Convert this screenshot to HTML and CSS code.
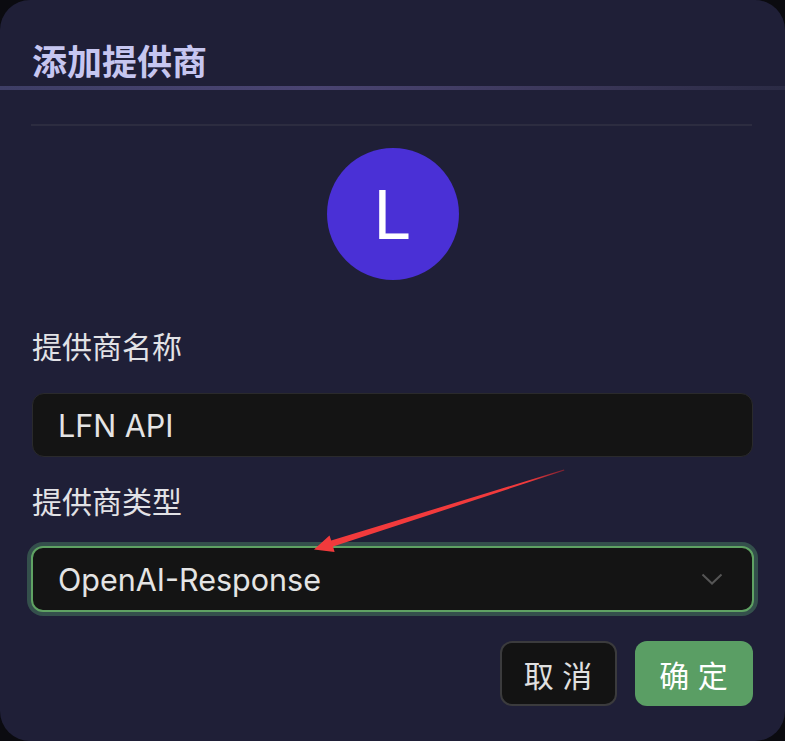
FILE: index.html
```html
<!DOCTYPE html>
<html lang="zh">
<head>
<meta charset="utf-8">
<title>添加提供商</title>
<link rel="stylesheet" href="styles.css">
</head>
<body>
<div class="dialog">
  <div class="header">
    <h2 class="title">添加提供商</h2>
  </div>
  <div class="header-line"></div>
  <div class="body">
    <div class="divider"></div>
    <div class="avatar-wrap">
      <div class="avatar">L</div>
    </div>
    <label class="label">提供商名称</label>
    <div class="input">LFN API</div>
    <label class="label label-type">提供商类型</label>
    <div class="select">
      <span class="select-value">OpenAI-Response</span>
      <svg class="chevron" width="22" height="12" viewBox="0 0 22 12"><path d="M1.5 1.5 L11 10.5 L20.5 1.5" fill="none" stroke="#555" stroke-width="2"/></svg>
    </div>
    <div class="actions">
      <button class="btn btn-cancel">取 消</button>
      <button class="btn btn-ok">确 定</button>
    </div>
  </div>
  <svg class="arrow" width="785" height="741" viewBox="0 0 785 741">
    <defs>
      <linearGradient id="ag" x1="315" y1="549" x2="565" y2="470" gradientUnits="userSpaceOnUse">
        <stop offset="0" stop-color="#f23a3c"/>
        <stop offset="0.85" stop-color="#f23a3c"/>
        <stop offset="1" stop-color="#7a2030"/>
      </linearGradient>
    </defs>
    <polygon points="314,549.5 329.5,535.5 331.2,540.6 564,469.6 564.4,470.6 333,546.6 334.6,552" fill="url(#ag)"/>
  </svg>
</div>
</body>
</html>
```
FILE: styles.css
```css
* { box-sizing: border-box; }
html, body { margin: 0; padding: 0; }
body {
  background: #0b0b10;
  font-family: "Inter", "Noto Sans CJK SC", sans-serif;
  width: 785px;
  height: 741px;
  overflow: hidden;
}
.dialog {
  position: relative;
  width: 785px;
  height: 741px;
  background: #1f1f37;
  border-radius: 30px;
  overflow: hidden;
}
.header {
  padding: 40px 32px 0;
}
.title {
  margin: 0;
  font-family: "Noto Sans CJK SC", sans-serif;
  font-weight: 700;
  font-size: 35px;
  line-height: 40px;
  color: #c6c6f0;
  letter-spacing: 0;
}
.header-line {
  margin-top: 6px;
  height: 4px;
  background: linear-gradient(90deg, #3e3e66 0%, #4a4472 40%, #3a3658 75%, #2b2b45 100%);
}
.body {
  padding: 34px 32px 0;
  display: flex;
  flex-direction: column;
}
.divider {
  height: 2px;
  margin: 0 1px 0 -1px;
  background: #2c2c40;
}
.avatar-wrap {
  display: flex;
  justify-content: center;
  margin-top: 22px;
}
.avatar {
  width: 132px;
  height: 132px;
  border-radius: 50%;
  background: #4a30d6;
  color: #fff;
  font-family: "Inter", sans-serif;
  font-size: 68px;
  font-weight: 400;
  display: flex;
  align-items: center;
  justify-content: center;
  line-height: 1;
}
.label {
  display: block;
  font-family: "Noto Sans CJK SC", sans-serif;
  font-size: 30px;
  line-height: 40px;
  color: #e2e2e6;
  margin-top: 45px;
}
.label-type { margin-top: 23px; }
.input {
  margin-top: 28px;
  height: 64px;
  background: #141414;
  border: 1px solid #2a2a2c;
  border-radius: 12px;
  display: flex;
  align-items: center;
  padding: 0 25px;
  font-size: 30.5px;
  color: #e4e4e4;
}
.select {
  margin-top: 26px;
  margin-left: -1px;
  margin-right: -1px;
  height: 66px;
  background: #141414;
  border: 2px solid #5fa263;
  border-radius: 12px;
  box-shadow: 0 0 0 4px #34504c;
  display: flex;
  align-items: center;
  justify-content: space-between;
  padding: 0 29px 0 25px;
  font-size: 30.5px;
  color: #e4e4e4;
}
.chevron { display: block; }
.actions {
  display: flex;
  justify-content: flex-end;
  gap: 18px;
  margin-top: 29px;
}
.btn {
  height: 65px;
  width: 117px;
  border-radius: 12px;
  font-family: "Noto Sans CJK SC", sans-serif;
  font-size: 30px;
  letter-spacing: 1px;
  padding: 0;
  cursor: pointer;
}
.btn-cancel {
  background: #131313;
  border: 2px solid #3b3b3d;
  color: #e0e0e0;
}
.btn-ok {
  width: 118px;
  background: #5a9e64;
  border: none;
  color: #fff;
}
.arrow {
  position: absolute;
  left: 0;
  top: 0;
  pointer-events: none;
}
```
